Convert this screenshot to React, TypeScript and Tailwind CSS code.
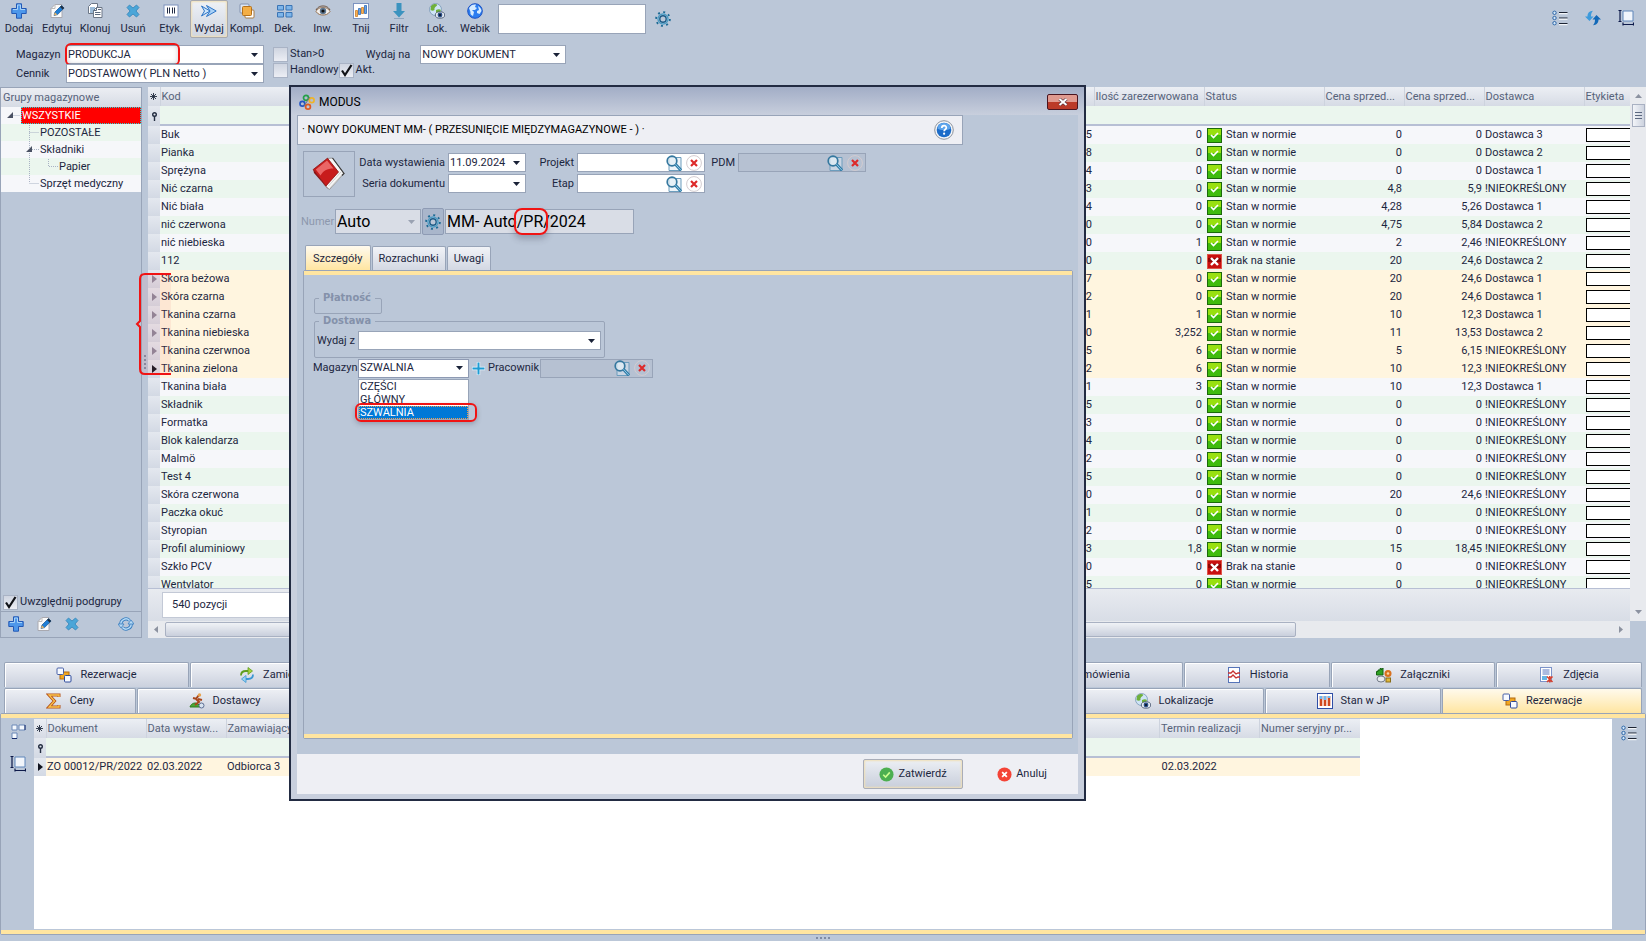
import type { ReactNode } from 'react'

interface StockRow {
  kod: string
  last: string
  reserved: string
  ok: boolean
  net: string
  gross: string
  supplier: string
}

const NONE = '!NIEOKREŚLONY'

const row = (kod: string, last: string, reserved: string, net: string, gross: string, supplier = NONE, ok = true): StockRow => ({
  kod, last, reserved, ok, net, gross, supplier,
})

const STOCK: StockRow[] = [
  row('Buk', '5', '0', '0', '0', 'Dostawca 3'),
  row('Pianka', '8', '0', '0', '0', 'Dostawca 2'),
  row('Sprężyna', '4', '0', '0', '0', 'Dostawca 1'),
  row('Nić czarna', '3', '0', '4,8', '5,9'),
  row('Nić biała', '4', '0', '4,28', '5,26', 'Dostawca 1'),
  row('nić czerwona', '0', '0', '4,75', '5,84', 'Dostawca 2'),
  row('nić niebieska', '0', '1', '2', '2,46'),
  row('112', '0', '0', '20', '24,6', 'Dostawca 2', false),
  row('Skora beżowa', '7', '0', '20', '24,6', 'Dostawca 1'),
  row('Skóra czarna', '2', '0', '20', '24,6', 'Dostawca 1'),
  row('Tkanina czarna', '1', '1', '10', '12,3', 'Dostawca 1'),
  row('Tkanina niebieska', '0', '3,252', '11', '13,53', 'Dostawca 2'),
  row('Tkanina czerwnoa', '5', '6', '5', '6,15'),
  row('Tkanina zielona', '2', '6', '10', '12,3'),
  row('Tkanina biała', '1', '3', '10', '12,3', 'Dostawca 1'),
  row('Składnik', '5', '0', '0', '0'),
  row('Formatka', '3', '0', '0', '0'),
  row('Blok kalendarza', '4', '0', '0', '0'),
  row('Malmö', '2', '0', '0', '0'),
  row('Test 4', '5', '0', '0', '0'),
  row('Skóra czerwona', '0', '0', '20', '24,6'),
  row('Paczka okuć', '1', '0', '0', '0'),
  row('Styropian', '2', '0', '0', '0'),
  row('Profil aluminiowy', '3', '1,8', '15', '18,45'),
  row('Szkło PCV', '0', '0', '0', '0', NONE, false),
  row('Wentylator', '5', '0', '0', '0'),
]

// rows 8..13 are the current multi-selection
const SELECTED_FROM = 8
const SELECTED_TO = 13

/* ---------- icons ---------- */

function Svg({ children, size = 16 }: { children: ReactNode; size?: number }) {
  return (
    <svg width={size} height={size} viewBox="0 0 16 16" fill="none" className="shrink-0" aria-hidden="true">
      {children}
    </svg>
  )
}

const PlusIcon = () => (
  <Svg>
    <path d="M5.5 .8h5v4.7h4.7v5h-4.7v4.7h-5v-4.7H.8v-5h4.7z" fill="#4d97ea" stroke="#2258b5" />
    <path d="M6.5 2h3v4.5H14M2 6.5h4.5V2" stroke="#a5d3fa" />
  </Svg>
)

const EditIcon = () => (
  <Svg>
    <path d="M2 5.5 6 1.5h7v13H2z" fill="#fbfbfb" stroke="#a9a9b0" />
    <path d="M2 5.5h4v-4" stroke="#bbb" />
    <path d="m5 12.5 1-3.5 6.5-6.5 2.6 2.6-6.6 6.5z" fill="#1f7fd6" stroke="#15508f" strokeWidth=".7" />
    <path d="m11 4 2.6 2.6 1.5-1.5-2.6-2.6z" fill="#22303f" />
    <path d="m5 12.5.9-3.2 2.4 2.3z" fill="#e9b566" />
  </Svg>
)

const CloneIcon = () => (
  <Svg>
    <path d="M4.5.5h6v10h-9v-7z" fill="#fff" stroke="#6c7787" />
    <path d="M3 5h5M3 7h5M3 9h5" stroke="#3a7ab5" />
    <path d="M9.500 4.500h5.500v10H6.500v-7z" fill="#fff" stroke="#6c7787" />
    <path d="M9.500 4.500v3h-3M8 9.500h5.500M8 11.500h5.500M11 6.500h3" stroke="#5b6a7f" />
  </Svg>
)

const CrossIcon = () => (
  <Svg>
    <path d="m4.500 2 3.500 3L11.500 2 14 4.500 11 8l3 3.500L11.500 14 8 11l-3.500 3L2 11.500 5 8 2 4.500z" fill="#4ba6d8" stroke="#3383b8" strokeWidth=".8" />
  </Svg>
)

const BarcodeIcon = () => (
  <Svg>
    <rect x="1" y="2" width="14" height="12" fill="#fff" stroke="#7e93bd" />
    <path d="M4.500 4.500v6M6.500 4.500v6M9.500 4.500v6M11.500 4.500v6" stroke="#222c44" />
  </Svg>
)

const IssueIcon = () => (
  <Svg>
    <path d="M.5 3 9 8 .5 13l3-5z" fill="#cfe6fb" stroke="#2c74c6" />
    <path d="M5.500 2.500 15.200 8l-9.700 5.500L9 8z" fill="#a9d1f7" stroke="#2c74c6" />
  </Svg>
)

const KitIcon = () => (
  <Svg>
    <rect x="1" y="1" width="9" height="9" rx="1" fill="#dde6f3" stroke="#8292b0" />
    <rect x="6" y="7" width="9" height="8" rx="1" fill="#fff" stroke="#a87c44" />
    <rect x="3.500" y="3.500" width="9" height="9" rx="1" fill="#f3ae45" stroke="#b4701a" />
  </Svg>
)

const TilesIcon = () => (
  <Svg>
    <path d="M.5 2.500h6v4.500h-6zM9 2.500h6v4.500H9zM.5 9.500h6V14h-6zM9 9.500h6V14H9z" fill="#7db5ea" stroke="#3b74b4" />
  </Svg>
)

const EyeIcon = () => (
  <Svg>
    <path d="M1 8.500C3 5 6 4.500 8 4.500s5 .5 7 4c-2 3-4.500 3.500-7 3.500s-5-.5-7-3.500z" fill="#f4f1ee" stroke="#96704e" />
    <path d="M1 7c2-3.500 5-4 7-4s5 .5 7 4" stroke="#6b4c33" />
    <circle cx="8" cy="8" r="3.200" fill="#5d7791" />
    <circle cx="8" cy="8" r="1.600" fill="#111" />
  </Svg>
)

const CutIcon = () => (
  <Svg>
    <rect x=".5" y=".5" width="15" height="15" fill="#fff" stroke="#7c93c0" />
    <path d="M2.500 7.500h2v6h-2zM8.500 4.500h2v6h-2z" fill="#f6b25b" stroke="#cd7f26" strokeWidth=".8" />
    <path d="M5.500 5.500h2v6h-2zM11.500 2.500h2v8h-2z" fill="#6aa4e6" stroke="#2f69b4" strokeWidth=".8" />
  </Svg>
)

const DownIcon = () => (
  <Svg>
    <path d="M5.500 0h5v8h3.500L8 14.500 2 8h3.500z" fill="#3b93bf" />
    <path d="M3 15.500h10" stroke="#8fa5bd" />
  </Svg>
)

const LocateIcon = () => (
  <Svg>
    <circle cx="6.500" cy="6.500" r="6" fill="#cfe4f6" stroke="#7796b4" strokeWidth=".8" />
    <path d="M2 3c2-2.500 5-2.500 6-1.500C9 3 5 4 5.500 6S3 8 1.500 7zM7 7c2-1 4-1 5 0l-2 4-3-1z" fill="#6fb03a" />
    <ellipse cx="11" cy="12" rx="4.700" ry="3.200" fill="#e7edf5" stroke="#3e4c66" strokeWidth=".8" />
    <circle cx="11" cy="12" r="2.400" fill="#2b4f88" />
    <circle cx="11" cy="12" r="1" fill="#060b18" />
  </Svg>
)

const GlobeIcon = () => (
  <Svg>
    <circle cx="8" cy="8" r="7.300" fill="#2b7df0" stroke="#1c52c4" />
    <path d="M2 5c2-3 4-4 7-3.500L8 4l2 1-2 2H5l2 2-1 4C4 12 3 11 3.500 9zM11 3c2 1 3.500 3 3.500 5l-2 3-2.500-1V8l2-1z" fill="#d5ebff" />
  </Svg>
)

const GearIcon = () => (
  <Svg>
    <circle cx="8" cy="8" r="6.900" stroke="#1c6a94" strokeWidth="1.800" strokeDasharray="2 3.420" />
    <circle cx="8" cy="8" r="5" fill="#cfe2ee" stroke="#4d9cc4" strokeWidth="1.400" />
    <circle cx="8" cy="8" r="3.200" fill="#bbc7d8" stroke="#1c5b86" strokeWidth="1.400" />
  </Svg>
)

const ListIcon = () => (
  <Svg>
    <path d="M7 2.500h8.500M7 8h8.500M7 13.500h8.500" stroke="#1d2433" strokeWidth="1.200" />
    <path d="M7 3.700h8.500M7 9.200h8.500M7 14.700h8.500" stroke="#fff" />
    <circle cx="2.500" cy="2.800" r="1.700" fill="#d5e8f8" stroke="#2d66a8" />
    <circle cx="2.500" cy="8" r="1.700" fill="#d5e8f8" stroke="#2d66a8" />
    <circle cx="2.500" cy="13.200" r="1.700" fill="#d5e8f8" stroke="#2d66a8" />
  </Svg>
)

const SyncIcon = () => (
  <Svg>
    <path d="M8 .8C4.500 1 2.500 3 2.500 6.500H0L4.500 11 8.500 6.500H6C6 4 6.500 2.500 8 .8z" fill="#3d9bdc" />
    <path d="M8 15.200c3.500-.2 5.500-2.200 5.500-5.700H16L11.500 5l-4 4.500H10c0 2.500-.5 4-2 5.700z" fill="#1269b8" />
  </Svg>
)

const SizeIcon = () => (
  <Svg>
    <path d="M.5.5h3M2 .5v11M.5 11.500h3M5 12.500v3M15.500 12.500v3M5 14.500h10.500" stroke="#0d1a4a" strokeWidth="1.200" />
    <path d="M5 1h10v10H5z" fill="#f1f5fb" stroke="#5e86ba" />
  </Svg>
)

const RefreshIcon = () => (
  <Svg>
    <path d="M3 9a5 5 0 0 1 8.500-4.500M13 7a5 5 0 0 1-8.500 4.500" stroke="#3a7fc0" strokeWidth="3.200" />
    <path d="M3 9a5 5 0 0 1 8.500-4.500M13 7a5 5 0 0 1-8.500 4.500" stroke="#b7dbf6" strokeWidth="1.500" />
    <path d="M0 8h6l-3 4zM10 8h6l-3-4z" fill="#b7dbf6" stroke="#3a7fc0" strokeWidth=".8" />
  </Svg>
)

const SearchIcon = () => (
  <Svg>
    <path d="M3 2.500h12v13H3z" fill="#dceaf4" fillOpacity=".5" stroke="#6c9dbd" />
    <circle cx="6" cy="6" r="4.800" fill="#e4eff6" fillOpacity=".7" stroke="#35789f" strokeWidth="1.700" />
    <path d="m9.500 9.300 5.500 6" stroke="#2f7aa6" strokeWidth="3" />
    <path d="m9.500 9.300 5.300 5.800" stroke="#8cc9e6" />
  </Svg>
)

const ClearIcon = () => (
  <Svg>
    <circle cx="8" cy="8" r="7.400" stroke="#d3ccd0" />
    <path d="m5 5 6 6M11 5l-6 6" stroke="#dd2a2a" strokeWidth="2.200" />
  </Svg>
)

const HelpIcon = () => (
  <svg width="20" height="20" viewBox="0 0 20 20" aria-hidden="true">
    <circle cx="10" cy="10" r="9.300" fill="#f2f4f7" stroke="#8d939d" />
    <circle cx="10" cy="10" r="7.300" fill="#1c6cc9" />
    <path d="M3.500 8.500a6.600 6.600 0 0 1 13 0c-3 2-10 2-13 0z" fill="#5ea5ec" />
    <path d="M7.800 8c0-3 4.500-3 4.500-.3 0 1.800-2.200 1.800-2.200 3.600" stroke="#fff" strokeWidth="1.700" fill="none" />
    <circle cx="10.100" cy="13.700" r="1.100" fill="#fff" />
  </svg>
)

const BookIcon = () => (
  <svg width="34" height="34" viewBox="0 0 34 34" aria-hidden="true">
    <path d="M15 1.500 20.500 1 32 16.500 17.500 32.500 12 28z" fill="#f6f6f6" stroke="#8a8a8a" strokeWidth=".8" />
    <path d="m19 30.500 12-13.500M16.500 29 29 15M17.500 31.500l13.500-15" stroke="#c2c2c2" strokeWidth=".7" />
    <path d="M20.500 1 32 16.500l-2 2" fill="none" stroke="#3c3c3c" strokeWidth="1.200" />
    <path d="M15.500 1.200 26.500 15 14 29 1.200 12.500z" fill="#c81c1c" stroke="#8a1010" strokeWidth=".8" />
    <path d="M15 3.500 21.500 11.500C15 11.500 11 14 8.500 18.500L3.800 12.500z" fill="#ea6666" />
    <path d="M1.200 12.500 14 29l2.500 3.500L2 16z" fill="#8a1010" />
  </svg>
)

const LogoIcon = () => (
  <Svg>
    <circle cx="7" cy="3.800" r="2.500" stroke="#25a048" strokeWidth="1.700" />
    <circle cx="12.700" cy="6.300" r="2.400" stroke="#eeb42b" strokeWidth="1.700" />
    <circle cx="3.400" cy="9.700" r="2.400" stroke="#2455c4" strokeWidth="1.700" />
    <circle cx="9" cy="12.700" r="2.400" stroke="#dd5a22" strokeWidth="1.700" />
    <path d="M11 3 5 12" stroke="#777" />
  </Svg>
)

const ReserveIcon = () => (
  <Svg>
    <rect x="4" y="5" width="9" height="7" fill="#f2a71f" stroke="#b26a10" />
    <rect x="1" y="1" width="6.500" height="6.500" rx="1" fill="#f7faff" stroke="#4a62a8" />
    <rect x="8.500" y="8.500" width="6.500" height="6.500" rx="1" fill="#f7faff" stroke="#2d4a9c" />
  </Svg>
)

const SwapIcon = () => (
  <Svg>
    <path d="M2 8.500C2 5 4 4 7 4h4" stroke="#5f9e1f" strokeWidth="1.800" />
    <path d="m9 .5 4.500 3.500L9 7.500z" fill="#a5d13a" stroke="#5f9e1f" strokeWidth=".8" />
    <path d="M14 7.500c0 3.500-2 4.500-5 4.500H5" stroke="#3a97d2" strokeWidth="1.800" />
    <path d="M7 8.500 2.500 12 7 15.500z" fill="#9bd3f3" stroke="#3a97d2" strokeWidth=".8" />
  </Svg>
)

const SumIcon = () => (
  <Svg>
    <path d="M13 4V2H3l5.500 6L3 14h10v-2" stroke="#b6541a" strokeWidth="3" />
    <path d="M13 4V2H3l5.500 6L3 14h10v-2" stroke="#fbc34d" strokeWidth="1.300" />
  </Svg>
)

const RunnerIcon = () => (
  <Svg>
    <path d="M1 14c1-4 6-5 8-3l3 3z" fill="#49a835" stroke="#2d7a1f" />
    <path d="M10 2 7 6l3 3-4 3M8 6 4 5M9 6l4 1" stroke="#a8461c" strokeWidth="2" />
    <circle cx="10.500" cy="2" r="1.700" fill="#e8a34d" />
    <circle cx="12.500" cy="12.500" r="2.500" fill="#d8e3f0" stroke="#5d6f94" />
  </Svg>
)

const HistoryIcon = () => (
  <Svg>
    <rect x="2.500" y=".5" width="11" height="15" fill="#fff" stroke="#5674b8" />
    <path d="M2 6h3l2-2 3 3 2-1h2M2 10h3l2-2 3 3 2-1h2" stroke="#c63131" strokeWidth="1.300" />
  </Svg>
)

const AttachIcon = () => (
  <Svg>
    <path d="M.5 8V4.500h1.500V3h2V1.500h1.500V3L7 1v7z" fill="#2fa324" stroke="#176312" />
    <circle cx="12" cy="6.500" r="3.500" fill="#d9711f" />
    <circle cx="12" cy="6.500" r="1.300" fill="#f8d8a8" />
    <ellipse cx="5" cy="12" rx="4" ry="3" fill="#e8ebef" stroke="#737b88" />
    <rect x="10" y="11" width="4.500" height="4" fill="#e1b93a" stroke="#8a6d17" />
  </Svg>
)

const PhotoIcon = () => (
  <Svg>
    <rect x="1.500" y=".5" width="11" height="14" fill="#fff" stroke="#7c93c8" />
    <path d="M3.500 3h7M3.500 5h7M3.500 7h7" stroke="#5877c0" />
    <path d="M3 9h5v4H3z" fill="#69b4e4" />
    <path d="m8 9.500 5.500 5.500M13.500 9.500 8 15M10.800 9v6.500" stroke="#d8402c" strokeWidth="1.600" />
  </Svg>
)

const StockIcon = () => (
  <Svg>
    <rect x=".5" y=".5" width="15" height="15" fill="#fff" stroke="#2f4ea6" />
    <path d="M4 3v10M8 3v10M12 3v10" stroke="#d1491f" strokeWidth="2.600" />
    <path d="M4 3v3M8 3v4M12 3v2" stroke="#6fb6ee" strokeWidth="2.600" />
  </Svg>
)

const BlocksIcon = () => (
  <Svg>
    <path d="M2 1h5v5H2zM9 1h6v5H9zM2 9h5v5.500H2z" fill="#f4f8fd" stroke="#6a88b8" />
    <path d="M2 14.500h5M15 1v5" stroke="#152a6a" />
  </Svg>
)

const OkBox = () => (
  <svg width="15" height="15" viewBox="0 0 15 15" className="block" aria-hidden="true">
    <rect x=".5" y=".5" width="14" height="14" fill="#3fbb0d" stroke="#1c6a0a" />
    <path d="M1 1h13v6H1z" fill="#98e010" />
    <path d="m4 7 2.500 2.500L11 5" stroke="#fff" strokeWidth="1.700" fill="none" />
  </svg>
)

const BadBox = () => (
  <svg width="15" height="15" viewBox="0 0 15 15" className="block" aria-hidden="true">
    <rect x=".5" y=".5" width="14" height="14" fill="#c80f0f" stroke="#e0564a" />
    <path d="M1 4h13v4H1z" fill="#8f0505" />
    <path d="m4 4 7 7M11 4l-7 7" stroke="#fff" strokeWidth="2.400" />
  </svg>
)

const Caret = ({ className = 'text-[#1a2238]' }: { className?: string }) => (
  <svg width="7" height="4" viewBox="0 0 7 4" className={className} aria-hidden="true">
    <path d="M0 0h7L3.500 4z" fill="currentColor" />
  </svg>
)

const Asterisk = () => (
  <svg width="7" height="7" viewBox="0 0 7 7" className="mx-auto block" aria-hidden="true">
    <path d="M3.500 0v7M0 3.500h7M1 1l5 5M6 1 1 6" stroke="#222c40" strokeWidth=".9" />
  </svg>
)

const FilterPin = () => (
  <svg width="7" height="9" viewBox="0 0 7 9" className="mx-auto block" aria-hidden="true">
    <circle cx="3.500" cy="2.500" r="1.800" fill="none" stroke="#222c40" strokeWidth="1.400" />
    <path d="M3.500 4v5" stroke="#222c40" strokeWidth="1.400" />
  </svg>
)

const RowMark = ({ dark = false }: { dark?: boolean }) => (
  <svg width="5" height="8" viewBox="0 0 5 8" className="mx-auto block" aria-hidden="true">
    <path d="M0 0v8l5-4z" fill={dark ? '#10131f' : '#8a869a'} />
  </svg>
)

/* ---------- form parts ---------- */

interface DropDownProps {
  id: string
  value: string
  className?: string
}

function DropDown({ id, value, className = '' }: DropDownProps) {
  return (
    <div className={`relative h-[19px] ${className}`}>
      <select
        id={id}
        defaultValue={value}
        className="block h-full w-full appearance-none border border-[#98a4b8] bg-white pr-4 pl-px text-[11px] leading-4 outline-none"
      >
        <option>{value}</option>
      </select>
      <span className="pointer-events-none absolute inset-y-0 right-[6px] flex items-center">
        <Caret />
      </span>
    </div>
  )
}

function LookupField({ id, label, disabled = false, className = '' }: { id: string; label: string; disabled?: boolean; className?: string }) {
  return (
    <div className={`flex h-[19px] items-center gap-1 border border-[#98a4b8] pr-[2px] ${disabled ? 'bg-[#b6c1d2]' : 'bg-white'} ${className}`}>
      <input id={id} disabled={disabled} className="h-full min-w-0 flex-1 bg-transparent px-1 outline-none" />
      <button aria-label={`Szukaj: ${label}`}><SearchIcon /></button>
      <button aria-label={`Wyczyść: ${label}`}><ClearIcon /></button>
    </div>
  )
}

function CheckBox({ label, checked = false }: { label: string; checked?: boolean }) {
  return (
    <label className="flex h-4 items-center gap-[2px]">
      <span className="relative h-[15px] w-[15px] shrink-0">
        <input
          type="checkbox"
          defaultChecked={checked}
          className="peer block h-full w-full appearance-none border border-[#a9b3c5] bg-linear-to-b from-[#cfd5e1] to-[#eceef4]"
        />
        <svg viewBox="0 0 15 15" className="pointer-events-none absolute inset-0 hidden peer-checked:block" aria-hidden="true">
          <path d="M3 7.500 6 12l6.500-10" stroke="#101217" strokeWidth="2.200" fill="none" />
        </svg>
      </span>
      {label}
    </label>
  )
}

/* ---------- top bars ---------- */

const TOOLS: { label: string; icon: ReactNode; active?: boolean }[] = [
  { label: 'Dodaj', icon: <PlusIcon /> },
  { label: 'Edytuj', icon: <EditIcon /> },
  { label: 'Klonuj', icon: <CloneIcon /> },
  { label: 'Usuń', icon: <CrossIcon /> },
  { label: 'Etyk.', icon: <BarcodeIcon /> },
  { label: 'Wydaj', icon: <IssueIcon />, active: true },
  { label: 'Kompl.', icon: <KitIcon /> },
  { label: 'Dek.', icon: <TilesIcon /> },
  { label: 'Inw.', icon: <EyeIcon /> },
  { label: 'Tnij', icon: <CutIcon /> },
  { label: 'Filtr', icon: <DownIcon /> },
  { label: 'Lok.', icon: <LocateIcon /> },
  { label: 'Webik', icon: <GlobeIcon /> },
]

function Toolbar() {
  return (
    <header className="flex h-[38px] items-start">
      {TOOLS.map(t => (
        <button
          key={t.label}
          className={`flex h-[38px] w-[38px] shrink-0 flex-col items-center gap-[2px] border pt-[2px] ${
            t.active
              ? 'rounded-xs border-[#a8a9ae] bg-linear-to-b from-[#eef1f6] to-[#cfd5e1] shadow-[inset_0_0_2px_1px_#f0e0b8]'
              : 'border-transparent'
          }`}
        >
          {t.icon}
          <span className="leading-4">{t.label}</span>
        </button>
      ))}
      <input aria-label="Szukaj" className="mt-1 ml-1 h-[30px] w-[148px] border border-[#98a4b8] bg-white px-1" />
      <button aria-label="Ustawienia wyszukiwania" className="mt-[11px] ml-[9px]"><GearIcon /></button>
      <div className="mt-[10px] mr-3 ml-auto flex gap-[17px]">
        <button aria-label="Lista"><ListIcon /></button>
        <button aria-label="Odśwież"><SyncIcon /></button>
        <button aria-label="Rozmiar"><SizeIcon /></button>
      </div>
    </header>
  )
}

function Filters() {
  return (
    <div className="flex h-[49px] items-start pt-[7px] pl-4">
      <div className="grid grid-cols-[50px_198px] items-center">
        <label htmlFor="mag">Magazyn</label>
        <div className="relative">
          <DropDown id="mag" value="PRODUKCJA" />
          <div className="pointer-events-none absolute -top-[2px] -left-px h-[23px] w-[115px] rounded-md border-2 border-[#f01414] shadow-[inset_0_0_5px_rgba(60,60,80,0.25)]" />
        </div>
        <label htmlFor="cennik">Cennik</label>
        <DropDown id="cennik" value="PODSTAWOWY( PLN Netto  )" />
      </div>
      <div className="mt-px ml-[9px]">
        <CheckBox label="Stan>0" />
        <div className="flex">
          <CheckBox label="Handlowy" />
          <CheckBox label="Akt." checked />
        </div>
      </div>
      <div className="-ml-[9px] flex items-center gap-[10px]">
        <label htmlFor="wydaj-na">Wydaj na</label>
        <DropDown id="wydaj-na" value="NOWY DOKUMENT" className="w-[146px]" />
      </div>
    </div>
  )
}

/* ---------- group tree ---------- */

const GROUPS = [
  { name: 'WSZYSTKIE', pad: 'pl-5' },
  { name: 'POZOSTAŁE', pad: 'pl-[39px]' },
  { name: 'Składniki', pad: 'pl-[39px]' },
  { name: 'Papier', pad: 'pl-[58px]' },
  { name: 'Sprzęt medyczny', pad: 'pl-[39px]' },
]

function GroupPanel() {
  return (
    <aside className="flex w-[142px] shrink-0 flex-col border-x border-[#98a4b8]">
      <h2 className="h-5 border-t border-[#98a4b8] bg-linear-to-b from-[#eceef3] to-[#d6dbe4] pl-[2px] leading-5 text-[#56627a]">
        Grupy magazynowe
      </h2>
      <ul className="relative">
        {GROUPS.map((g, i) => (
          <li key={g.name} className={`h-[17px] leading-[18px] ${g.pad} ${i % 2 ? 'bg-[#ebf6ee]' : 'bg-[#f6f7fa]'}`}>
            {i === 0 ? (
              <span className="block h-[17px] bg-[#ff0000] pl-px text-white outline outline-dotted -outline-offset-1 outline-[#22dddd]">{g.name}</span>
            ) : g.name}
          </li>
        ))}
        <svg width="60" height="85" viewBox="0 0 60 85" className="pointer-events-none absolute top-0 left-0" aria-hidden="true">
          <path d="M12.500 8.500H19M28.500 18v58M28.500 25.500H38M31 42.500h7M47.500 52v7.500H57M28.500 76.500H38" stroke="#a9b2c4" strokeDasharray="1 1" fill="none" />
          <path d="M12 5v6H6zM31 39v6h-6z" fill="#4a5163" />
        </svg>
      </ul>
      <div className="mt-auto pb-px pl-[2px]">
        <CheckBox label="Uwzględnij podgrupy" checked />
      </div>
      <div className="flex h-[27px] items-center border-y border-[#98a4b8] px-[7px] pb-[2px]">
        <button aria-label="Dodaj grupę"><PlusIcon /></button>
        <button aria-label="Edytuj grupę" className="ml-3"><EditIcon /></button>
        <button aria-label="Usuń grupę" className="ml-3"><CrossIcon /></button>
        <button aria-label="Odśwież grupy" className="ml-auto"><RefreshIcon /></button>
      </div>
    </aside>
  )
}

/* ---------- stock grid ---------- */

const TH = 'h-[19px] truncate border-l border-[#cdd3de] pl-px text-left leading-[19px] font-normal'
const MARK = 'bg-linear-to-b from-[#e4e8ef] to-[#d3d9e4] align-middle'

function StockGrid() {
  return (
    <section className="relative grid min-w-0 flex-1 grid-cols-[minmax(0,1fr)_16px] grid-rows-[minmax(0,1fr)_17px]">
      <div className="flex min-h-0 min-w-0 flex-col">
        <div className="min-h-0 flex-1 overflow-hidden">
          <table className="w-full table-fixed border-collapse">
            <colgroup>
              <col className="w-3" />
              <col className="w-[200px]" />
              <col />
              <col className="w-[110px]" />
              <col className="w-[120px]" />
              <col className="w-[80px]" />
              <col className="w-[80px]" />
              <col className="w-[100px]" />
              <col className="w-[46px]" />
            </colgroup>
            <thead>
              <tr className="bg-linear-to-b from-[#eceff4] to-[#d6dbe5] text-[#56627a]">
                <th className="h-[19px]"><Asterisk /></th>
                <th className={TH}>Kod</th>
                <th className={TH} />
                <th className={TH}>Ilość zarezerwowana</th>
                <th className={TH}>Status</th>
                <th className={TH}>Cena sprzed...</th>
                <th className={TH}>Cena sprzed...</th>
                <th className={TH}>Dostawca</th>
                <th className={TH}>Etykieta</th>
              </tr>
              <tr className="h-5 bg-[#ebf6ee]">
                <td className={MARK}><FilterPin /></td>
                <td colSpan={8} className="shadow-[inset_0_-2px_0_#b7bfd4]" />
              </tr>
            </thead>
            <tbody>
              {STOCK.map((r, i) => {
                const selected = i >= SELECTED_FROM && i <= SELECTED_TO
                const tone = selected ? 'bg-[#fff5df]' : i % 2 ? 'bg-[#ebf6ee]' : 'bg-[#f6f7fa]'
                return (
                  <tr key={r.kod} className={`h-[18px] leading-[18px] ${tone}`}>
                    <td className={MARK}>{selected && <RowMark dark={i === SELECTED_TO} />}</td>
                    <td className="pl-px">{r.kod}</td>
                    <td className="pr-[2px] text-right">{r.last}</td>
                    <td className="pr-[2px] text-right">{r.reserved}</td>
                    <td>
                      <span className="flex h-[18px] items-center gap-1 pl-[3px]">
                        {r.ok ? <OkBox /> : <BadBox />}
                        {r.ok ? 'Stan w normie' : 'Brak na stanie'}
                      </span>
                    </td>
                    <td className="pr-[2px] text-right">{r.net}</td>
                    <td className="pr-[2px] text-right">{r.gross}</td>
                    <td className="pl-px">{r.supplier}</td>
                    <td className="pl-[2px]"><div className="h-[14px] border border-r-0 border-black bg-white" /></td>
                  </tr>
                )
              })}
            </tbody>
          </table>
        </div>
        <div className="flex h-[33px] shrink-0 border-t border-[#b7bfd4] bg-linear-to-b from-[#e8ebf0] to-[#d8dde6] py-[3px] pl-[14px]">
          <div className="w-[200px] border border-[#c3c9d6] bg-white pl-[9px] leading-6">540 pozycji</div>
        </div>
      </div>

      <div className="flex flex-col items-center bg-[#e8eaee]">
        <svg width="7" height="4" viewBox="0 0 7 4" className="mt-[7px]" aria-hidden="true"><path d="M0 4h7L3.500 0z" fill="#8c92a0" /></svg>
        <div className="mt-[6px] flex h-[23px] w-[13px] flex-col items-center justify-center gap-[2px] border border-[#a9b1c2] bg-linear-to-r from-[#f2f4f8] to-[#cdd3df]">
          <i className="h-px w-[7px] bg-[#5c6880]" />
          <i className="h-px w-[7px] bg-[#5c6880]" />
          <i className="h-px w-[7px] bg-[#5c6880]" />
        </div>
        <Caret className="mt-auto mb-[7px] text-[#8c92a0]" />
      </div>

      <div className="flex items-center bg-[#e8eaee] pr-[7px] pl-[6px]">
        <svg width="4" height="7" viewBox="0 0 4 7" aria-hidden="true"><path d="M4 0v7L0 3.500z" fill="#8c92a0" /></svg>
        <div className="ml-[7px] h-[15px] w-[77%] rounded-xs border border-[#a9b1c2] bg-linear-to-b from-[#f0f2f6] to-[#c9cfdc]" />
        <svg width="4" height="7" viewBox="0 0 4 7" className="ml-auto" aria-hidden="true"><path d="M0 0v7l4-3.500z" fill="#8c92a0" /></svg>
      </div>

      {/* brace that marks the selected rows */}
      <svg width="38" height="104" viewBox="0 0 38 104" className="pointer-events-none absolute top-[185px] -left-[13px]" aria-hidden="true">
        <path d="M36 2H10q-4 0-4 4v94q0 2 4 2h26z" fill="#ef6a6a" fillOpacity=".1" />
        <path d="M36 2H10q-5 0-5 5v42l-3 3 3 3v42q0 5 5 5h26" fill="none" stroke="#f01414" strokeWidth="2" />
      </svg>
    </section>
  )
}

/* ---------- bottom tabs ---------- */

const TAB = 'flex h-[25px] items-center justify-center gap-2 rounded-t-xs border border-b-0 border-[#98a4b8] bg-linear-to-b from-[#eef0f5] to-[#cbd1de] shadow-[inset_1px_1px_0_#fff]'

function BottomTabs() {
  return (
    <nav className="flex flex-col gap-px px-1">
      <div className="flex gap-px">
        <button className={`${TAB} w-[185px]`}><ReserveIcon />Rezerwacje</button>
        <button className={`${TAB} w-[176px]`}><SwapIcon />Zamienniki</button>
        <div className={`${TAB} flex-1`} />
        <button className={`${TAB} w-[190px]`}><ReserveIcon />Zamówienia</button>
        <button className={`${TAB} w-[146px]`}><HistoryIcon />Historia</button>
        <button className={`${TAB} w-[164px]`}><AttachIcon />Załączniki</button>
        <button className={`${TAB} w-[146px]`}><PhotoIcon />Zdjęcia</button>
      </div>
      <div className="flex gap-px">
        <button className={`${TAB} w-[132px]`}><SumIcon />Ceny</button>
        <button className={`${TAB} w-[175px]`}><RunnerIcon />Dostawcy</button>
        <div className={`${TAB} flex-1`} />
        <button className={`${TAB} w-[180px]`}><LocateIcon />Lokalizacje</button>
        <button className={`${TAB} w-[176px]`}><StockIcon />Stan w JP</button>
        <button className="flex h-[25px] w-[200px] items-center justify-center gap-2 rounded-t-xs border border-b-0 border-[#98a4b8] bg-linear-to-b from-[#fffaec] to-[#ffe5a0]">
          <ReserveIcon />Rezerwacje
        </button>
      </div>
    </nav>
  )
}

function Reservations() {
  return (
    <section className="flex flex-1 flex-col rounded-xs border border-[#98a4b8]">
      <div className="h-1 bg-[#ffe5a0]" />
      <div className="flex flex-1 py-px">
        <div className="flex w-[33px] shrink-0 flex-col items-center gap-4 pt-[5px]">
          <button aria-label="Układ"><BlocksIcon /></button>
          <button aria-label="Dopasuj"><SizeIcon /></button>
        </div>
        <div className="min-w-0 flex-1 bg-white">
          <table className="w-[84%] table-fixed border-collapse">
            <colgroup>
              <col className="w-3" />
              <col className="w-[100px]" />
              <col className="w-[80px]" />
              <col />
              <col className="w-[100px]" />
              <col className="w-[100px]" />
            </colgroup>
            <thead>
              <tr className="bg-linear-to-b from-[#eceff4] to-[#d6dbe5] text-[#56627a]">
                <th className="h-[19px]"><Asterisk /></th>
                <th className={TH}>Dokument</th>
                <th className={TH}>Data wystaw...</th>
                <th className={TH}>Zamawiający</th>
                <th className={TH}>Termin realizacji</th>
                <th className={TH}>Numer seryjny pr...</th>
              </tr>
              <tr className="h-5 bg-[#ebf6ee]">
                <td className={MARK}><FilterPin /></td>
                <td colSpan={5} className="shadow-[inset_0_-2px_0_#b7bfd4]" />
              </tr>
            </thead>
            <tbody>
              <tr className="h-[18px] bg-[#fff5df] leading-[18px]">
                <td className={MARK}><RowMark dark /></td>
                <td className="pl-px whitespace-nowrap">ZO 00012/PR/2022</td>
                <td className="pl-px">02.03.2022</td>
                <td className="pl-px">Odbiorca 3</td>
                <td className="pl-[2px]">02.03.2022</td>
                <td />
              </tr>
            </tbody>
          </table>
        </div>
        <div className="flex w-[33px] shrink-0 justify-center pt-[6px]">
          <button aria-label="Kolumny" className="self-start"><ListIcon /></button>
        </div>
      </div>
      <div className="h-1 bg-[#ffe5a0]" />
    </section>
  )
}

/* ---------- MM document window ---------- */

const DLG_TAB = 'h-6 rounded-t-xs border border-b-0 border-[#98a4b8] bg-linear-to-b from-[#f1f3f7] to-[#d3d8e3] px-[6px]'

function DocumentDialog() {
  return (
    <div
      role="dialog"
      aria-label="MODUS"
      className="absolute top-[85px] left-[289px] flex h-[716px] w-[797px] flex-col border-2 border-[#222b42] bg-[#c8cfdd]"
    >
      <div className="flex h-7 shrink-0 items-center bg-linear-to-b from-[#a2adc6] to-[#c8cfdd] pt-[2px] pr-[6px] pl-2">
        <LogoIcon />
        <span className="ml-1 text-[12px] text-black">MODUS</span>
        <button aria-label="Zamknij" className="ml-auto flex h-4 w-[31px] items-center justify-center rounded-xs border border-[#4a1520] bg-linear-to-b from-[#e09a90] from-50% to-[#bb3a28] to-50%">
          <svg width="10" height="8" viewBox="0 0 10 8" aria-hidden="true">
            <path d="m1.500 1 7 6M8.500 1l-7 6" stroke="#54303a" strokeWidth="3.200" />
            <path d="m1.500 1 7 6M8.500 1l-7 6" stroke="#fff" strokeWidth="2" />
          </svg>
        </button>
      </div>

      <div className="mx-[6px] mb-[5px] flex min-h-0 flex-1 flex-col bg-[#bbc7d8]">
        <div className="flex h-[30px] w-[666px] shrink-0 items-center justify-between border border-[#98a4b8] bg-[#eeeff4] pr-2 pl-1 text-black">
          <h1>· NOWY DOKUMENT MM- ( PRZESUNIĘCIE MIĘDZYMAGAZYNOWE - ) ·</h1>
          <button aria-label="Pomoc"><HelpIcon /></button>
        </div>

        <div className="flex shrink-0 items-start pt-[6px] pl-[6px]">
          <button aria-label="Katalog" className="flex h-[46px] w-[52px] items-center justify-center border border-[#98a4b8]"><BookIcon /></button>
          <div className="mt-[2px] grid grid-cols-[90px_78px_45px_128px_27px_128px] items-center gap-x-[3px] gap-y-[2px] text-right">
            <label htmlFor="data">Data wystawienia</label>
            <DropDown id="data" value="11.09.2024" />
            <label htmlFor="projekt">Projekt</label>
            <LookupField id="projekt" label="Projekt" />
            <label htmlFor="pdm">PDM</label>
            <LookupField id="pdm" label="PDM" disabled />
            <label htmlFor="seria">Seria dokumentu</label>
            <DropDown id="seria" value="" />
            <label htmlFor="etap">Etap</label>
            <LookupField id="etap" label="Etap" />
          </div>
        </div>

        <div className="mt-[11px] flex shrink-0 items-center pl-1 text-[#8d98ad]">
          <label htmlFor="numer" className="w-[34px]">Numer</label>
          <div className="relative h-[25px] w-[86px]">
            <select id="numer" className="h-full w-full appearance-none border border-[#98a4b8] bg-[#d9dde6] pl-px text-[16px] text-black">
              <option>Auto</option>
            </select>
            <span className="pointer-events-none absolute inset-y-0 right-[6px] flex items-center"><Caret className="text-[#9aa2b2]" /></span>
          </div>
          <button aria-label="Ustawienia numeru" className="mx-px flex h-[27px] w-[22px] items-center justify-center rounded-xs border border-[#8e9bb4] bg-[#a9b6cb]"><GearIcon /></button>
          <div className="relative h-[25px] w-[189px]">
            <input aria-label="Numer dokumentu" readOnly value="MM- Auto/PR/2024" className="block h-full w-full border border-[#98a4b8] bg-[#d9dde6] pl-px text-[16px] text-black" />
            <div className="pointer-events-none absolute -top-px left-[69px] h-[27px] w-[34px] rounded-lg border-2 border-[#f01414] shadow-[0_4px_6px_rgba(60,60,80,0.3)]" />
          </div>
        </div>

        <div role="tablist" className="mt-[10px] flex shrink-0 items-end gap-px pl-2">
          <button role="tab" aria-selected="true" className="h-[25px] rounded-t-xs border border-b-0 border-[#98a4b8] bg-linear-to-b from-[#fffaee] to-[#ffe5a0] px-[7px] pt-px">Szczegóły</button>
          <button role="tab" className={DLG_TAB}>Rozrachunki</button>
          <button role="tab" className={DLG_TAB}>Uwagi</button>
        </div>

        <div className="mr-[5px] ml-[6px] flex min-h-0 flex-1 flex-col rounded-xs border border-[#98a4b8]">
          <div className="h-1 shrink-0 bg-[#ffe5a0]" />
          <div className="flex-1 pt-[15px] pl-[10px]">
            <fieldset className="h-6 w-[68px] rounded-xs border border-[#98a4b8]">
              <legend className="ml-1 px-1 font-[DejaVu_Sans_Condensed] leading-4 font-bold text-[#8491aa]">Płatność</legend>
            </fieldset>
            <fieldset className="-mt-px w-[291px] rounded-xs border border-[#98a4b8] pr-[3px] pb-[7px] pl-[2px]">
              <legend className="ml-[2px] px-1 font-[DejaVu_Sans_Condensed] leading-4 font-bold text-[#8491aa]">Dostawa</legend>
              <div className="flex items-center pt-[2px]">
                <label htmlFor="wydaj-z" className="w-[41px]">Wydaj z</label>
                <DropDown id="wydaj-z" value="" className="flex-1" />
              </div>
            </fieldset>
            <div className="-ml-px flex h-5 items-center">
              <label htmlFor="mag-doc" className="w-[45px]">Magazyn</label>
              <div className="relative w-[111px]">
                <DropDown id="mag-doc" value="SZWALNIA" className="h-5 outline outline-[#8e9ab3] -outline-offset-1" />
                <ul role="listbox" aria-label="Magazyn" className="absolute top-5 left-0 w-full border border-[#98a4b8] bg-white leading-[13px]">
                  <li role="option" aria-selected="false" className="pl-px">CZĘŚCI</li>
                  <li role="option" aria-selected="false" className="pl-px">GŁÓWNY</li>
                  <li role="option" aria-selected="true" className="bg-[#0078d7] pl-px text-white outline outline-dotted -outline-offset-1 outline-[#f0a050]">SZWALNIA</li>
                </ul>
                <div className="pointer-events-none absolute top-11 -left-[3px] h-[19px] w-[122px] rounded-md border-2 border-[#f01414] shadow-[0_2px_5px_rgba(60,60,80,0.3)]" />
              </div>
              <button aria-label="Dodaj magazyn" className="ml-[3px]">
                <svg width="13" height="13" viewBox="0 0 13 13" aria-hidden="true">
                  <path d="M6.500 0v13M0 6.500h13" stroke="#eaf6fc" strokeWidth="3.400" />
                  <path d="M6.500 .5v12M.5 6.500h12" stroke="#1f9cd3" strokeWidth="2" />
                </svg>
              </button>
              <label htmlFor="pracownik" className="ml-[3px] w-[52px]">Pracownik</label>
              <LookupField id="pracownik" label="Pracownik" disabled className="w-[113px]" />
            </div>
          </div>
          <div className="h-1 shrink-0 bg-[#ffe5a0]" />
        </div>

        <footer className="mt-[15px] flex h-10 shrink-0 items-center justify-end gap-[9px] bg-[#eeeff4] pr-[6px]">
          <button className="flex h-[30px] w-[100px] items-center justify-center gap-1 rounded-xs border border-[#a9adb8] bg-linear-to-b from-[#eceff4] to-[#c8cedb] shadow-[inset_0_0_2px_1px_#f0e0b8]">
            <Svg size={15}>
              <circle cx="8" cy="8" r="7.500" fill="#4caf50" />
              <path d="m4.500 8.300 2.500 2.400 4.500-5" stroke="#ccff90" strokeWidth="1.700" />
            </Svg>
            Zatwierdź
          </button>
          <button className="flex h-[30px] w-[100px] items-center justify-center gap-1">
            <Svg size={15}>
              <circle cx="8" cy="8" r="7.500" fill="#f44336" />
              <path d="m5.500 5.500 5 5M10.500 5.500l-5 5" stroke="#fff" strokeWidth="1.900" />
            </Svg>
            Anuluj
          </button>
        </footer>
      </div>
    </div>
  )
}

export default function App() {
  return (
    <div className="relative flex min-h-screen flex-col bg-[#bbc7d8] font-[Roboto,sans-serif] text-[11px] leading-4 text-[#1c2640]">
      <Toolbar />
      <Filters />
      <main className="flex h-[551px]">
        <GroupPanel />
        <div className="flex w-[6px] shrink-0 flex-col items-center gap-[2px] pt-[268px]">
          <i className="h-[2px] w-[2px] bg-[#7f8ba3]" />
          <i className="h-[2px] w-[2px] bg-[#7f8ba3]" />
          <i className="h-[2px] w-[2px] bg-[#7f8ba3]" />
          <i className="h-[2px] w-[2px] bg-[#7f8ba3]" />
        </div>
        <StockGrid />
      </main>
      <div className="mt-6 flex flex-1 flex-col">
        <BottomTabs />
        <Reservations />
      </div>
      <div className="flex h-[6px] items-center justify-center gap-[2px]">
        <i className="h-[2px] w-[2px] bg-[#7f8ba3]" />
        <i className="h-[2px] w-[2px] bg-[#7f8ba3]" />
        <i className="h-[2px] w-[2px] bg-[#7f8ba3]" />
        <i className="h-[2px] w-[2px] bg-[#7f8ba3]" />
      </div>
      <DocumentDialog />
    </div>
  )
}
